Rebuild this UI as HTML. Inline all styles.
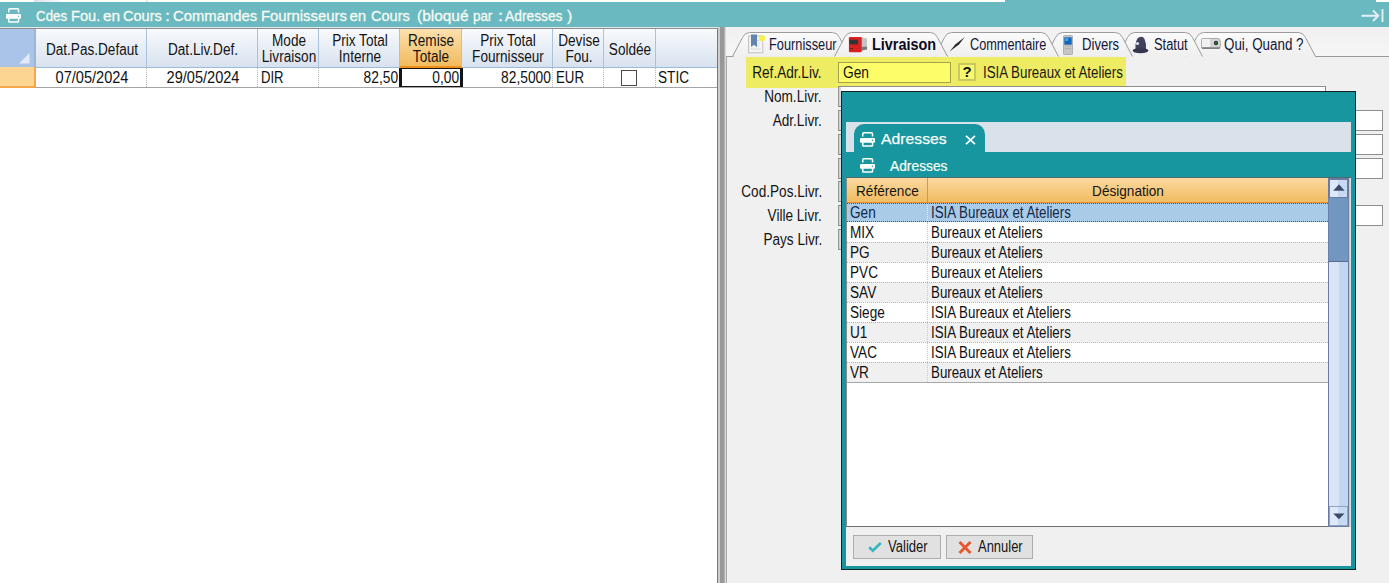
<!DOCTYPE html>
<html><head><meta charset="utf-8">
<style>
*{box-sizing:border-box;margin:0;padding:0}
html,body{width:1389px;height:583px;overflow:hidden;background:#f0f0f0;font-family:"Liberation Sans",sans-serif;color:#000;position:relative}
.a{position:absolute}
.tx{position:absolute;white-space:pre}
svg{position:absolute;overflow:visible}
</style></head><body>
<div class="a" style="left:0px;top:0px;width:1389px;height:2px;background:#fff"></div>
<div class="a" style="left:34px;top:0px;width:30px;height:2px;background:linear-gradient(90deg,#dde2ee,#fff)"></div>
<div class="a" style="left:146px;top:0px;width:2px;height:2px;background:#e4e8ee"></div>
<div class="a" style="left:1005px;top:0px;width:371px;height:2px;background:#6bb9c0"></div>
<div class="a" style="left:0px;top:2px;width:1389px;height:25px;background:#6bb9c0"></div>
<svg style="left:6px;top:8.3px" width="16" height="16" viewBox="0 0 16 16">
<path d="M2.75 4.6V1.9Q2.75 0.75 3.9 0.75H11.4Q12.55 0.75 12.55 1.9V4.6" fill="none" stroke="#fff" stroke-width="1.5"/>
<rect x="0" y="6" width="15" height="4.7" rx="1" fill="#fff"/>
<circle cx="12.4" cy="8.2" r="0.7" fill="#6bb9c0"/>
<path d="M2.75 10V13.2Q2.75 13.95 3.5 13.95H11.8Q12.55 13.95 12.55 13.2V10" fill="none" stroke="#fff" stroke-width="1.5"/>
</svg>
<div class="tx" style="top:8px;font-size:15px;line-height:15px;color:#f6faf2;font-weight:normal;left:36.0px;transform-origin:0 0;transform:scaleX(0.89);-webkit-text-stroke:0.3px #f6faf2;">Cdes</div>
<div class="tx" style="top:8px;font-size:15px;line-height:15px;color:#f6faf2;font-weight:normal;left:70.9px;transform-origin:0 0;transform:scaleX(0.975);-webkit-text-stroke:0.3px #f6faf2;">Fou.</div>
<div class="tx" style="top:8px;font-size:15px;line-height:15px;color:#f6faf2;font-weight:normal;left:102.5px;transform-origin:0 0;transform:scaleX(1.03);-webkit-text-stroke:0.3px #f6faf2;">en</div>
<div class="tx" style="top:8px;font-size:15px;line-height:15px;color:#f6faf2;font-weight:normal;left:122.9px;transform-origin:0 0;transform:scaleX(0.97);-webkit-text-stroke:0.3px #f6faf2;">Cours</div>
<div class="tx" style="top:8px;font-size:15px;line-height:15px;color:#f6faf2;font-weight:normal;left:165.2px;transform-origin:0 0;transform:scaleX(1.2);-webkit-text-stroke:0.3px #f6faf2;">:</div>
<div class="tx" style="top:8px;font-size:15px;line-height:15px;color:#f6faf2;font-weight:normal;left:173.1px;transform-origin:0 0;transform:scaleX(0.99);-webkit-text-stroke:0.3px #f6faf2;">Commandes</div>
<div class="tx" style="top:8px;font-size:15px;line-height:15px;color:#f6faf2;font-weight:normal;left:260.9px;transform-origin:0 0;transform:scaleX(0.99);-webkit-text-stroke:0.3px #f6faf2;">Fournisseurs</div>
<div class="tx" style="top:8px;font-size:15px;line-height:15px;color:#f6faf2;font-weight:normal;left:349.5px;transform-origin:0 0;transform:scaleX(1.0);-webkit-text-stroke:0.3px #f6faf2;">en</div>
<div class="tx" style="top:8px;font-size:15px;line-height:15px;color:#f6faf2;font-weight:normal;left:371.1px;transform-origin:0 0;transform:scaleX(0.97);-webkit-text-stroke:0.3px #f6faf2;">Cours</div>
<div class="tx" style="top:8px;font-size:15px;line-height:15px;color:#f6faf2;font-weight:normal;left:416.5px;transform-origin:0 0;transform:scaleX(1.03);-webkit-text-stroke:0.3px #f6faf2;">(bloqué</div>
<div class="tx" style="top:8px;font-size:15px;line-height:15px;color:#f6faf2;font-weight:normal;left:472.5px;transform-origin:0 0;transform:scaleX(0.89);-webkit-text-stroke:0.3px #f6faf2;">par</div>
<div class="tx" style="top:8px;font-size:15px;line-height:15px;color:#f6faf2;font-weight:normal;left:497.9px;transform-origin:0 0;transform:scaleX(1.2);-webkit-text-stroke:0.3px #f6faf2;">:</div>
<div class="tx" style="top:8px;font-size:15px;line-height:15px;color:#f6faf2;font-weight:normal;left:505.4px;transform-origin:0 0;transform:scaleX(0.92);-webkit-text-stroke:0.3px #f6faf2;">Adresses</div>
<div class="tx" style="top:8px;font-size:15px;line-height:15px;color:#f6faf2;font-weight:normal;left:566.5px;transform-origin:0 0;transform:scaleX(1.05);-webkit-text-stroke:0.3px #f6faf2;">)</div>
<svg style="left:0;top:0" width="1389" height="30"><path d="M1361.5 15.7H1378.5M1373 10.5L1378.3 15.7L1373 21M1382.5 9.3V22" fill="none" stroke="#e4f0f2" stroke-width="1.9"/></svg>
<div class="a" style="left:0px;top:27px;width:718px;height:1px;background:#e4e9eb"></div>
<div class="a" style="left:0px;top:28px;width:718px;height:1px;background:#8c8c8c"></div>
<div class="a" style="left:0px;top:29px;width:717px;height:554px;background:#fff"></div>
<div class="a" style="left:0px;top:29px;width:34px;height:38px;background:#a9c4e8"></div>
<div class="a" style="left:34px;top:29px;width:2px;height:38px;background:#9db6d8"></div>
<svg style="left:19px;top:52.5px" width="11" height="11"><path d="M10.5 0V10.5H0Z" fill="#e4eaf5"/></svg>
<div class="a" style="left:36px;top:29px;width:111px;height:39px;background:linear-gradient(#f8fafd,#d8e2ee);border-bottom:1px solid #9dbad9"></div>
<div class="a" style="left:146px;top:29px;width:1px;height:38px;background:#a9c3df"></div>
<div class="tx" style="top:42px;font-size:16px;line-height:16px;color:#141414;font-weight:normal;left:-208.5px;width:600px;text-align:center;transform-origin:50% 0;transform:scaleX(0.85);">Dat.Pas.Defaut</div>
<div class="a" style="left:147px;top:29px;width:111px;height:39px;background:linear-gradient(#f8fafd,#d8e2ee);border-bottom:1px solid #9dbad9"></div>
<div class="a" style="left:257px;top:29px;width:1px;height:38px;background:#a9c3df"></div>
<div class="tx" style="top:42px;font-size:16px;line-height:16px;color:#141414;font-weight:normal;left:-97.5px;width:600px;text-align:center;transform-origin:50% 0;transform:scaleX(0.85);">Dat.Liv.Def.</div>
<div class="a" style="left:258px;top:29px;width:61px;height:39px;background:linear-gradient(#f8fafd,#d8e2ee);border-bottom:1px solid #9dbad9"></div>
<div class="a" style="left:318px;top:29px;width:1px;height:38px;background:#a9c3df"></div>
<div class="tx" style="top:33px;font-size:16px;line-height:16px;color:#141414;font-weight:normal;left:-11.5px;width:600px;text-align:center;transform-origin:50% 0;transform:scaleX(0.85);">Mode</div>
<div class="tx" style="top:49px;font-size:16px;line-height:16px;color:#141414;font-weight:normal;left:-11.5px;width:600px;text-align:center;transform-origin:50% 0;transform:scaleX(0.85);">Livraison</div>
<div class="a" style="left:319px;top:29px;width:81px;height:39px;background:linear-gradient(#f8fafd,#d8e2ee);border-bottom:1px solid #9dbad9"></div>
<div class="a" style="left:399px;top:29px;width:1px;height:38px;background:#a9c3df"></div>
<div class="tx" style="top:33px;font-size:16px;line-height:16px;color:#141414;font-weight:normal;left:59.5px;width:600px;text-align:center;transform-origin:50% 0;transform:scaleX(0.85);">Prix Total</div>
<div class="tx" style="top:49px;font-size:16px;line-height:16px;color:#141414;font-weight:normal;left:59.5px;width:600px;text-align:center;transform-origin:50% 0;transform:scaleX(0.85);">Interne</div>
<div class="a" style="left:400px;top:29px;width:62px;height:39px;background:linear-gradient(#fbe0ae,#f2bb5e);border-bottom:2px solid #f0901c"></div>
<div class="a" style="left:461px;top:29px;width:1px;height:38px;background:#a9c3df"></div>
<div class="tx" style="top:33px;font-size:16px;line-height:16px;color:#141414;font-weight:normal;left:131.0px;width:600px;text-align:center;transform-origin:50% 0;transform:scaleX(0.85);">Remise</div>
<div class="tx" style="top:49px;font-size:16px;line-height:16px;color:#141414;font-weight:normal;left:131.0px;width:600px;text-align:center;transform-origin:50% 0;transform:scaleX(0.85);">Totale</div>
<div class="a" style="left:462px;top:29px;width:91px;height:39px;background:linear-gradient(#f8fafd,#d8e2ee);border-bottom:1px solid #9dbad9"></div>
<div class="a" style="left:552px;top:29px;width:1px;height:38px;background:#a9c3df"></div>
<div class="tx" style="top:33px;font-size:16px;line-height:16px;color:#141414;font-weight:normal;left:207.5px;width:600px;text-align:center;transform-origin:50% 0;transform:scaleX(0.85);">Prix Total</div>
<div class="tx" style="top:49px;font-size:16px;line-height:16px;color:#141414;font-weight:normal;left:207.5px;width:600px;text-align:center;transform-origin:50% 0;transform:scaleX(0.85);">Fournisseur</div>
<div class="a" style="left:553px;top:29px;width:51px;height:39px;background:linear-gradient(#f8fafd,#d8e2ee);border-bottom:1px solid #9dbad9"></div>
<div class="a" style="left:603px;top:29px;width:1px;height:38px;background:#a9c3df"></div>
<div class="tx" style="top:33px;font-size:16px;line-height:16px;color:#141414;font-weight:normal;left:278.5px;width:600px;text-align:center;transform-origin:50% 0;transform:scaleX(0.85);">Devise</div>
<div class="tx" style="top:49px;font-size:16px;line-height:16px;color:#141414;font-weight:normal;left:278.5px;width:600px;text-align:center;transform-origin:50% 0;transform:scaleX(0.85);">Fou.</div>
<div class="a" style="left:604px;top:29px;width:52px;height:39px;background:linear-gradient(#f8fafd,#d8e2ee);border-bottom:1px solid #9dbad9"></div>
<div class="a" style="left:655px;top:29px;width:1px;height:38px;background:#a9c3df"></div>
<div class="tx" style="top:42px;font-size:16px;line-height:16px;color:#141414;font-weight:normal;left:330.0px;width:600px;text-align:center;transform-origin:50% 0;transform:scaleX(0.85);">Soldée</div>
<div class="a" style="left:656px;top:29px;width:61px;height:39px;background:linear-gradient(#f8fafd,#d8e2ee);border-bottom:1px solid #9dbad9"></div>
<div class="a" style="left:0px;top:67px;width:36px;height:21px;background:#fdd592;border-right:2px solid #f5a54a;border-bottom:2px solid #f5a54a"></div>
<div class="a" style="left:36px;top:87px;width:681px;height:1px;background:#a4a4a4"></div>
<div class="a" style="left:146px;top:68px;width:1px;height:19px;border-left:1px dotted #b8b8b8"></div>
<div class="a" style="left:257px;top:68px;width:1px;height:19px;border-left:1px dotted #b8b8b8"></div>
<div class="a" style="left:318px;top:68px;width:1px;height:19px;border-left:1px dotted #b8b8b8"></div>
<div class="a" style="left:399px;top:68px;width:1px;height:19px;border-left:1px dotted #b8b8b8"></div>
<div class="a" style="left:552px;top:68px;width:1px;height:19px;border-left:1px dotted #b8b8b8"></div>
<div class="a" style="left:603px;top:68px;width:1px;height:19px;border-left:1px dotted #b8b8b8"></div>
<div class="a" style="left:655px;top:68px;width:1px;height:19px;border-left:1px dotted #b8b8b8"></div>
<div class="tx" style="top:70px;font-size:16px;line-height:16px;color:#111;font-weight:normal;left:-208.5px;width:600px;text-align:center;transform-origin:50% 0;transform:scaleX(0.91);">07/05/2024</div>
<div class="tx" style="top:70px;font-size:16px;line-height:16px;color:#111;font-weight:normal;left:-97.5px;width:600px;text-align:center;transform-origin:50% 0;transform:scaleX(0.91);">29/05/2024</div>
<div class="tx" style="top:70px;font-size:16px;line-height:16px;color:#111;font-weight:normal;left:261px;transform-origin:0 0;transform:scaleX(0.82);">DIR</div>
<div class="tx" style="top:70px;font-size:16px;line-height:16px;color:#111;font-weight:normal;right:991px;transform-origin:100% 0;text-align:right;transform:scaleX(0.86);">82,50</div>
<div class="a" style="left:399px;top:68px;width:64px;height:19px;border-top:1.5px solid #151515;border-bottom:1.5px solid #151515;border-left:3px solid #151515;border-right:3px solid #151515;background:#fff"></div>
<div class="tx" style="top:70px;font-size:16px;line-height:16px;color:#111;font-weight:normal;right:930px;transform-origin:100% 0;text-align:right;transform:scaleX(0.86);">0,00</div>
<div class="tx" style="top:70px;font-size:16px;line-height:16px;color:#111;font-weight:normal;right:838.5px;transform-origin:100% 0;text-align:right;transform:scaleX(0.86);">82,5000</div>
<div class="tx" style="top:70px;font-size:16px;line-height:16px;color:#111;font-weight:normal;left:556px;transform-origin:0 0;transform:scaleX(0.83);">EUR</div>
<div class="a" style="left:621px;top:70px;width:16px;height:16px;border:1.6px solid #4a4a4a;background:#fff"></div>
<div class="tx" style="top:70px;font-size:16px;line-height:16px;color:#111;font-weight:normal;left:658px;transform-origin:0 0;transform:scaleX(0.85);">STIC</div>
<div class="a" style="left:717px;top:29px;width:1px;height:554px;background:#777"></div>
<div class="a" style="left:718px;top:27px;width:8px;height:556px;background:linear-gradient(90deg,#cdcdcd 0,#cdcdcd 2px,#989898 2px,#989898 6px,#b4b4b4 6px,#b4b4b4 7px,#d8d8d8 7px)"></div>
<div class="a" style="left:726px;top:27px;width:1px;height:29px;background:#f2f2f2"></div>
<div class="a" style="left:726px;top:56px;width:1px;height:527px;background:#a8a8a8"></div>
<div class="a" style="left:727px;top:27px;width:662px;height:556px;background:#f0f0f0"></div>
<div class="a" style="left:727px;top:27px;width:662px;height:29px;background:linear-gradient(#f0f0f0,#f6f6f6)"></div>
<div class="a" style="left:727px;top:56px;width:7px;height:1px;background:#9a9a9a"></div>
<div class="a" style="left:1315px;top:56px;width:74px;height:1px;background:#9a9a9a"></div>
<svg style="left:0;top:0" width="1389" height="60" viewBox="0 0 1389 60"><defs><linearGradient id="tg" x1="0" y1="0" x2="0" y2="1"><stop offset="0" stop-color="#fbfbfb"/><stop offset="1" stop-color="#efefef"/></linearGradient></defs><path d="M1186.5 56.5 L1196.5 37.5 Q1199 32.5 1203.5 32.5 L1298.5 32.5 Q1303 32.5 1305.5 37.5 L1315.5 56.5" fill="url(#tg)" stroke="#9c9c9c" stroke-width="1"/><path d="M1117.5 56.5 L1127.5 37.5 Q1130 32.5 1134.5 32.5 L1185.5 32.5 Q1190 32.5 1192.5 37.5 L1202.5 56.5" fill="url(#tg)" stroke="#9c9c9c" stroke-width="1"/><path d="M1045.5 56.5 L1055.5 37.5 Q1058 32.5 1062.5 32.5 L1115.5 32.5 Q1120 32.5 1122.5 37.5 L1132.5 56.5" fill="url(#tg)" stroke="#9c9c9c" stroke-width="1"/><path d="M934.5 56.5 L944.5 37.5 Q947 32.5 951.5 32.5 L1041.5 32.5 Q1046 32.5 1048.5 37.5 L1058.5 56.5" fill="url(#tg)" stroke="#9c9c9c" stroke-width="1"/><path d="M732.5 56.5 L742.5 37.5 Q745 32.5 749.5 32.5 L832.5 32.5 Q837 32.5 839.5 37.5 L849.5 56.5" fill="url(#tg)" stroke="#9c9c9c" stroke-width="1"/><path d="M834.5 56.5 L844.5 37.5 Q847 32.5 851.5 32.5 L930.5 32.5 Q935 32.5 937.5 37.5 L947.5 56.5" fill="url(#tg)" stroke="#9c9c9c" stroke-width="1"/></svg>
<svg style="left:744px;top:31px" width="24" height="25" viewBox="0 0 24 25">
<rect x="4.6" y="5" width="14.2" height="16.8" fill="#f4f4f4" stroke="#bcbcbc" stroke-width="0.9"/>
<path d="M10.5 9.5h5M10.5 12h5M10.5 14.5h5M6.5 18h10" stroke="#d4d4d4" stroke-width="0.8"/>
<path d="M7 3.4h6v12.6l-3-2.2-3 2.2z" fill="#6384ae"/>
<circle cx="18.2" cy="7.3" r="3" fill="#f6f04a"/>
</svg>
<svg style="left:844px;top:33px" width="26" height="23" viewBox="0 0 26 23">
<path d="M17.7 4.3L23 5.5V16.6L17.7 17.5z" fill="#c4c4c4"/>
<path d="M17.7 14L23 13.5V16.6L17.7 17.5z" fill="#7a7a7a"/>
<rect x="4.9" y="4" width="12.9" height="15.3" rx="1.2" fill="#d82222"/>
<rect x="5.5" y="6.7" width="8.5" height="4.7" fill="#333"/>
<path d="M6 15.5h3" stroke="#5a1a1a" stroke-width="0.9"/>
</svg>
<svg style="left:949px;top:36px" width="17" height="17" viewBox="0 0 17 17"><path d="M0.6 15.6L6.5 8.2L15.8 0.9L10 8.6Z" fill="#2a2a2a"/></svg>
<svg style="left:1063px;top:34.7px" width="10" height="20" viewBox="0 0 10 20">
<rect x="0.5" y="0.5" width="9" height="19" rx="0.8" fill="#c6c6c6" stroke="#b0b0b0"/>
<rect x="1.3" y="2.3" width="7.4" height="7.4" fill="#1466b8"/><rect x="2.3" y="3" width="3" height="3" fill="#38a8f0"/>
<path d="M2 11h6M2 13.5h6" stroke="#a8a8a8" stroke-width="0.8"/>
</svg>
<svg style="left:1132px;top:35.8px" width="17" height="18" viewBox="0 0 17 18">
<path d="M3.5 13Q3 3.5 7 1.2Q11 -0.5 12.5 3Q14.5 7.5 14 13z" fill="#40425e"/>
<path d="M0.5 14.5Q1.5 12.2 8.5 12.2Q15.5 12.2 16.5 14.5Q15.5 17.2 8.5 17.2Q1.5 17.2 0.5 14.5z" fill="#34364e"/>
<circle cx="5.5" cy="7.5" r="1.6" fill="#e0e0ea"/>
</svg>
<svg style="left:1200.8px;top:37.5px" width="20" height="11" viewBox="0 0 20 11">
<path d="M0.5 2Q0.5 0.5 2 0.5H17Q19.5 0.5 19.5 4.5V7Q19.5 10.5 17 10.5H2Q0.5 10.5 0.5 9z" fill="#d4d4d4" stroke="#a0a0a0" stroke-width="0.8"/>
<rect x="1" y="1" width="8" height="8" fill="#f2f2f2"/>
<path d="M1 10H19" stroke="#555" stroke-width="1"/>
<circle cx="15" cy="5" r="2.2" fill="#333"/><circle cx="15" cy="5" r="1" fill="#1a8a2a"/>
</svg>
<div class="tx" style="top:37px;font-size:16px;line-height:16px;color:#14163a;font-weight:normal;left:769px;transform-origin:0 0;transform:scaleX(0.8);">Fournisseur</div>
<div class="tx" style="top:37px;font-size:16px;line-height:16px;color:#0a0a1e;font-weight:bold;left:872px;transform-origin:0 0;transform:scaleX(0.9);">Livraison</div>
<div class="tx" style="top:37px;font-size:16px;line-height:16px;color:#14163a;font-weight:normal;left:969.5px;transform-origin:0 0;transform:scaleX(0.795);">Commentaire</div>
<div class="tx" style="top:37px;font-size:16px;line-height:16px;color:#14163a;font-weight:normal;left:1082px;transform-origin:0 0;transform:scaleX(0.82);">Divers</div>
<div class="tx" style="top:37px;font-size:16px;line-height:16px;color:#14163a;font-weight:normal;left:1154px;transform-origin:0 0;transform:scaleX(0.805);">Statut</div>
<div class="tx" style="top:37px;font-size:16px;line-height:16px;color:#14163a;font-weight:normal;left:1223.5px;transform-origin:0 0;transform:scaleX(0.835);">Qui, Quand ?</div>
<div class="a" style="left:746px;top:57px;width:380px;height:31px;background:#eeec62"></div>
<div class="a" style="left:838px;top:62px;width:113px;height:21px;background:#fdfd6a;border:1px solid #a4a24a"></div>
<div class="tx" style="top:65px;font-size:16px;line-height:16px;color:#111;font-weight:normal;left:843px;transform-origin:0 0;transform:scaleX(0.86);">Gen</div>
<div class="a" style="left:958px;top:63px;width:18px;height:18px;background:#f8f86c;border:2px solid #cac862"></div>
<div class="tx" style="top:64px;font-size:15px;line-height:15px;color:#111;font-weight:bold;left:667px;width:600px;text-align:center;transform-origin:50% 0;transform:scaleX(1);">?</div>
<div class="tx" style="top:65px;font-size:16px;line-height:16px;color:#1a1a1a;font-weight:normal;left:983px;transform-origin:0 0;transform:scaleX(0.832);">ISIA Bureaux et Ateliers</div>
<div class="tx" style="top:65px;font-size:16px;line-height:16px;color:#141414;font-weight:normal;right:567px;transform-origin:100% 0;text-align:right;transform:scaleX(0.85);">Ref.Adr.Liv.</div>
<div class="tx" style="top:89px;font-size:16px;line-height:16px;color:#141414;font-weight:normal;right:567px;transform-origin:100% 0;text-align:right;transform:scaleX(0.85);">Nom.Livr.</div>
<div class="tx" style="top:113px;font-size:16px;line-height:16px;color:#141414;font-weight:normal;right:567px;transform-origin:100% 0;text-align:right;transform:scaleX(0.85);">Adr.Livr.</div>
<div class="tx" style="top:184px;font-size:16px;line-height:16px;color:#141414;font-weight:normal;right:567px;transform-origin:100% 0;text-align:right;transform:scaleX(0.85);">Cod.Pos.Livr.</div>
<div class="tx" style="top:208px;font-size:16px;line-height:16px;color:#141414;font-weight:normal;right:567px;transform-origin:100% 0;text-align:right;transform:scaleX(0.85);">Ville Livr.</div>
<div class="tx" style="top:232px;font-size:16px;line-height:16px;color:#141414;font-weight:normal;right:567px;transform-origin:100% 0;text-align:right;transform:scaleX(0.85);">Pays Livr.</div>
<div class="a" style="left:838px;top:86px;width:488px;height:21px;background:#fff;border:1px solid #8e8e8e;border-left:1px solid #989898;box-shadow:inset 1px 0 0 #cfcfcf,inset 2px 0 0 #dadada"></div>
<div class="a" style="left:838px;top:110px;width:545px;height:21px;background:#fff;border:1px solid #8e8e8e;border-left:1px solid #989898;box-shadow:inset 1px 0 0 #cfcfcf,inset 2px 0 0 #dadada"></div>
<div class="a" style="left:838px;top:134px;width:545px;height:21px;background:#fff;border:1px solid #8e8e8e;border-left:1px solid #989898;box-shadow:inset 1px 0 0 #cfcfcf,inset 2px 0 0 #dadada"></div>
<div class="a" style="left:838px;top:158px;width:545px;height:21px;background:#fff;border:1px solid #8e8e8e;border-left:1px solid #989898;box-shadow:inset 1px 0 0 #cfcfcf,inset 2px 0 0 #dadada"></div>
<div class="a" style="left:838px;top:181px;width:300px;height:21px;background:#fff;border:1px solid #8e8e8e;border-left:1px solid #989898;box-shadow:inset 1px 0 0 #cfcfcf,inset 2px 0 0 #dadada"></div>
<div class="a" style="left:838px;top:205px;width:545px;height:21px;background:#fff;border:1px solid #8e8e8e;border-left:1px solid #989898;box-shadow:inset 1px 0 0 #cfcfcf,inset 2px 0 0 #dadada"></div>
<div class="a" style="left:838px;top:229px;width:300px;height:21px;background:#fff;border:1px solid #8e8e8e;border-left:1px solid #989898;box-shadow:inset 1px 0 0 #cfcfcf,inset 2px 0 0 #dadada"></div>
<div class="a" style="left:841px;top:91px;width:515px;height:479px;background:#1896a0;border:1px solid #162224"></div>
<div class="a" style="left:846px;top:122px;width:505px;height:30px;background:#d9e2ea"></div>
<div class="a" style="left:854px;top:123.5px;width:131px;height:29px;background:#1896a0;border-radius:10px 10px 0 0"></div>
<svg style="left:859.7px;top:132.3px" width="16" height="16" viewBox="0 0 16 16">
<path d="M2.75 4.6V1.9Q2.75 0.75 3.9 0.75H11.4Q12.55 0.75 12.55 1.9V4.6" fill="none" stroke="#fff" stroke-width="1.5"/>
<rect x="0" y="6" width="15" height="4.7" rx="1" fill="#fff"/>
<circle cx="12.4" cy="8.2" r="0.7" fill="#1896a0"/>
<path d="M2.75 10V13.2Q2.75 13.95 3.5 13.95H11.8Q12.55 13.95 12.55 13.2V10" fill="none" stroke="#fff" stroke-width="1.5"/>
</svg>
<div class="tx" style="top:131px;font-size:15px;line-height:15px;color:#fafcf6;font-weight:normal;left:881px;transform-origin:0 0;transform:scaleX(1.05);-webkit-text-stroke:0.25px #fafcf6;">Adresses</div>
<svg style="left:965px;top:135px" width="11" height="10" viewBox="0 0 11 10"><path d="M1 0.8L10 9.2M10 0.8L1 9.2" stroke="#fff" stroke-width="1.6"/></svg>
<svg style="left:859.7px;top:158.4px" width="16" height="16" viewBox="0 0 16 16">
<path d="M2.75 4.6V1.9Q2.75 0.75 3.9 0.75H11.4Q12.55 0.75 12.55 1.9V4.6" fill="none" stroke="#fff" stroke-width="1.5"/>
<rect x="0" y="6" width="15" height="4.7" rx="1" fill="#fff"/>
<circle cx="12.4" cy="8.2" r="0.7" fill="#1896a0"/>
<path d="M2.75 10V13.2Q2.75 13.95 3.5 13.95H11.8Q12.55 13.95 12.55 13.2V10" fill="none" stroke="#fff" stroke-width="1.5"/>
</svg>
<div class="tx" style="top:159px;font-size:14px;line-height:14px;color:#fafcf6;font-weight:normal;left:890px;transform-origin:0 0;transform:scaleX(0.985);-webkit-text-stroke:0.2px #fafcf6;">Adresses</div>
<div class="a" style="left:846px;top:178px;width:505px;height:388px;background:#f0f0f0"></div>
<div class="a" style="left:846px;top:177px;width:505px;height:1px;background:#4e6c70"></div>
<div class="a" style="left:846px;top:178px;width:482px;height:349px;background:#fff;border-left:1px solid #8a8a8a;border-bottom:1px solid #707070"></div>
<div class="a" style="left:847px;top:178px;width:481px;height:25px;background:linear-gradient(#fbd9a0,#f1bc62);border-bottom:1px solid #f08c20"></div>
<div class="a" style="left:927px;top:178px;width:1px;height:24px;background:#f09030"></div>
<div class="tx" style="top:183px;font-size:15px;line-height:15px;color:#141414;font-weight:normal;left:856px;transform-origin:0 0;transform:scaleX(0.907);">Référence</div>
<div class="tx" style="top:183px;font-size:15px;line-height:15px;color:#141414;font-weight:normal;left:828px;width:600px;text-align:center;transform-origin:50% 0;transform:scaleX(0.907);">Désignation</div>
<div class="a" style="left:847px;top:203px;width:481px;height:19px;background:#a9cbe8"></div>
<div class="a" style="left:847px;top:203px;width:481px;height:1px;border-top:1px dotted #6a4a2a"></div>
<div class="a" style="left:847px;top:221px;width:481px;height:1px;border-top:1px dotted #6a4a2a"></div>
<div class="a" style="left:927px;top:204px;width:1px;height:17px;border-left:1px dotted #eef4fa"></div>
<div class="tx" style="top:205px;font-size:16px;line-height:16px;color:#12284a;font-weight:normal;left:850px;transform-origin:0 0;transform:scaleX(0.85);">Gen</div>
<div class="tx" style="top:205px;font-size:16px;line-height:16px;color:#12284a;font-weight:normal;left:931px;transform-origin:0 0;transform:scaleX(0.832);">ISIA Bureaux et Ateliers</div>
<div class="a" style="left:847px;top:222px;width:481px;height:20px;background:#ffffff"></div>
<div class="a" style="left:927px;top:222px;width:1px;height:20px;border-left:1px dotted #c8c8c8"></div>
<div class="tx" style="top:225px;font-size:16px;line-height:16px;color:#111;font-weight:normal;left:850px;transform-origin:0 0;transform:scaleX(0.85);">MIX</div>
<div class="tx" style="top:225px;font-size:16px;line-height:16px;color:#111;font-weight:normal;left:931px;transform-origin:0 0;transform:scaleX(0.832);">Bureaux et Ateliers</div>
<div class="a" style="left:847px;top:242px;width:481px;height:20px;background:#f0f0f0"></div>
<div class="a" style="left:927px;top:242px;width:1px;height:20px;border-left:1px dotted #c8c8c8"></div>
<div class="tx" style="top:245px;font-size:16px;line-height:16px;color:#111;font-weight:normal;left:850px;transform-origin:0 0;transform:scaleX(0.85);">PG</div>
<div class="tx" style="top:245px;font-size:16px;line-height:16px;color:#111;font-weight:normal;left:931px;transform-origin:0 0;transform:scaleX(0.832);">Bureaux et Ateliers</div>
<div class="a" style="left:847px;top:262px;width:481px;height:20px;background:#ffffff"></div>
<div class="a" style="left:927px;top:262px;width:1px;height:20px;border-left:1px dotted #c8c8c8"></div>
<div class="tx" style="top:265px;font-size:16px;line-height:16px;color:#111;font-weight:normal;left:850px;transform-origin:0 0;transform:scaleX(0.85);">PVC</div>
<div class="tx" style="top:265px;font-size:16px;line-height:16px;color:#111;font-weight:normal;left:931px;transform-origin:0 0;transform:scaleX(0.832);">Bureaux et Ateliers</div>
<div class="a" style="left:847px;top:282px;width:481px;height:20px;background:#f0f0f0"></div>
<div class="a" style="left:927px;top:282px;width:1px;height:20px;border-left:1px dotted #c8c8c8"></div>
<div class="tx" style="top:285px;font-size:16px;line-height:16px;color:#111;font-weight:normal;left:850px;transform-origin:0 0;transform:scaleX(0.85);">SAV</div>
<div class="tx" style="top:285px;font-size:16px;line-height:16px;color:#111;font-weight:normal;left:931px;transform-origin:0 0;transform:scaleX(0.832);">Bureaux et Ateliers</div>
<div class="a" style="left:847px;top:302px;width:481px;height:20px;background:#ffffff"></div>
<div class="a" style="left:927px;top:302px;width:1px;height:20px;border-left:1px dotted #c8c8c8"></div>
<div class="tx" style="top:305px;font-size:16px;line-height:16px;color:#111;font-weight:normal;left:850px;transform-origin:0 0;transform:scaleX(0.85);">Siege</div>
<div class="tx" style="top:305px;font-size:16px;line-height:16px;color:#111;font-weight:normal;left:931px;transform-origin:0 0;transform:scaleX(0.832);">ISIA Bureaux et Ateliers</div>
<div class="a" style="left:847px;top:322px;width:481px;height:20px;background:#f0f0f0"></div>
<div class="a" style="left:927px;top:322px;width:1px;height:20px;border-left:1px dotted #c8c8c8"></div>
<div class="tx" style="top:325px;font-size:16px;line-height:16px;color:#111;font-weight:normal;left:850px;transform-origin:0 0;transform:scaleX(0.85);">U1</div>
<div class="tx" style="top:325px;font-size:16px;line-height:16px;color:#111;font-weight:normal;left:931px;transform-origin:0 0;transform:scaleX(0.832);">ISIA Bureaux et Ateliers</div>
<div class="a" style="left:847px;top:342px;width:481px;height:20px;background:#ffffff"></div>
<div class="a" style="left:927px;top:342px;width:1px;height:20px;border-left:1px dotted #c8c8c8"></div>
<div class="tx" style="top:345px;font-size:16px;line-height:16px;color:#111;font-weight:normal;left:850px;transform-origin:0 0;transform:scaleX(0.85);">VAC</div>
<div class="tx" style="top:345px;font-size:16px;line-height:16px;color:#111;font-weight:normal;left:931px;transform-origin:0 0;transform:scaleX(0.832);">ISIA Bureaux et Ateliers</div>
<div class="a" style="left:847px;top:362px;width:481px;height:20px;background:#f0f0f0"></div>
<div class="a" style="left:927px;top:362px;width:1px;height:20px;border-left:1px dotted #c8c8c8"></div>
<div class="tx" style="top:365px;font-size:16px;line-height:16px;color:#111;font-weight:normal;left:850px;transform-origin:0 0;transform:scaleX(0.85);">VR</div>
<div class="tx" style="top:365px;font-size:16px;line-height:16px;color:#111;font-weight:normal;left:931px;transform-origin:0 0;transform:scaleX(0.832);">Bureaux et Ateliers</div>
<div class="a" style="left:847px;top:242px;width:481px;height:1px;border-top:1px dotted #b4b4b4"></div>
<div class="a" style="left:847px;top:262px;width:481px;height:1px;border-top:1px dotted #b4b4b4"></div>
<div class="a" style="left:847px;top:282px;width:481px;height:1px;border-top:1px dotted #b4b4b4"></div>
<div class="a" style="left:847px;top:302px;width:481px;height:1px;border-top:1px dotted #b4b4b4"></div>
<div class="a" style="left:847px;top:322px;width:481px;height:1px;border-top:1px dotted #b4b4b4"></div>
<div class="a" style="left:847px;top:342px;width:481px;height:1px;border-top:1px dotted #b4b4b4"></div>
<div class="a" style="left:847px;top:362px;width:481px;height:1px;border-top:1px dotted #b4b4b4"></div>
<div class="a" style="left:847px;top:382px;width:481px;height:1px;border-top:1px solid #a8a8a8"></div>
<div class="a" style="left:1328px;top:178px;width:21px;height:349px;background:linear-gradient(90deg,#d7e5f7 0,#d7e5f7 50%,#c3d6f1 50%);border:1px solid #6a7aa0"></div>
<div class="a" style="left:1328px;top:197px;width:21px;height:65px;background:#7196c0;border-left:1px solid #6a80a8;border-right:1px solid #6a80a8;border-bottom:1px solid #5a6a90"></div>
<div class="a" style="left:1329px;top:179px;width:19px;height:19px;background:linear-gradient(90deg,#dde9f8 0,#dde9f8 50%,#c8daf2 50%);border:1.5px solid #6a7ca4"></div>
<svg style="left:1320px;top:170px" width="40" height="30"><path d="M19 14.3L24.7 20.7H13.2Z" fill="#3c4a68"/></svg>
<div class="a" style="left:1329px;top:506px;width:19px;height:20px;background:linear-gradient(90deg,#dde9f8 0,#dde9f8 50%,#c8daf2 50%);border:1px solid #8ea2c4"></div>
<svg style="left:1320px;top:500px" width="40" height="30"><path d="M13.2 13.6H24.5L18.9 19.3Z" fill="#3c4a68"/></svg>
<div class="a" style="left:1349px;top:178px;width:2px;height:349px;background:linear-gradient(90deg,#c4c4c4,#e4e4e4)"></div>
<div class="a" style="left:853px;top:535px;width:88px;height:24px;background:#e1e1e1;border:1px solid #adadad"></div>
<svg style="left:867.5px;top:542px" width="14" height="10" viewBox="0 0 14 10"><path d="M1.2 5.2L4.8 8.6L12.8 1" fill="none" stroke="#36b4c4" stroke-width="2.6"/></svg>
<div class="tx" style="top:539px;font-size:16px;line-height:16px;color:#141414;font-weight:normal;left:887.5px;transform-origin:0 0;transform:scaleX(0.816);">Valider</div>
<div class="a" style="left:946px;top:535px;width:87px;height:24px;background:#e1e1e1;border:1px solid #adadad"></div>
<svg style="left:957.5px;top:540.5px" width="14" height="13" viewBox="0 0 14 13"><path d="M1.5 1L12.5 12M12.5 1L1.5 12" stroke="#e8552a" stroke-width="2.8"/></svg>
<div class="tx" style="top:539px;font-size:16px;line-height:16px;color:#141414;font-weight:normal;left:978px;transform-origin:0 0;transform:scaleX(0.81);">Annuler</div>
</body></html>
